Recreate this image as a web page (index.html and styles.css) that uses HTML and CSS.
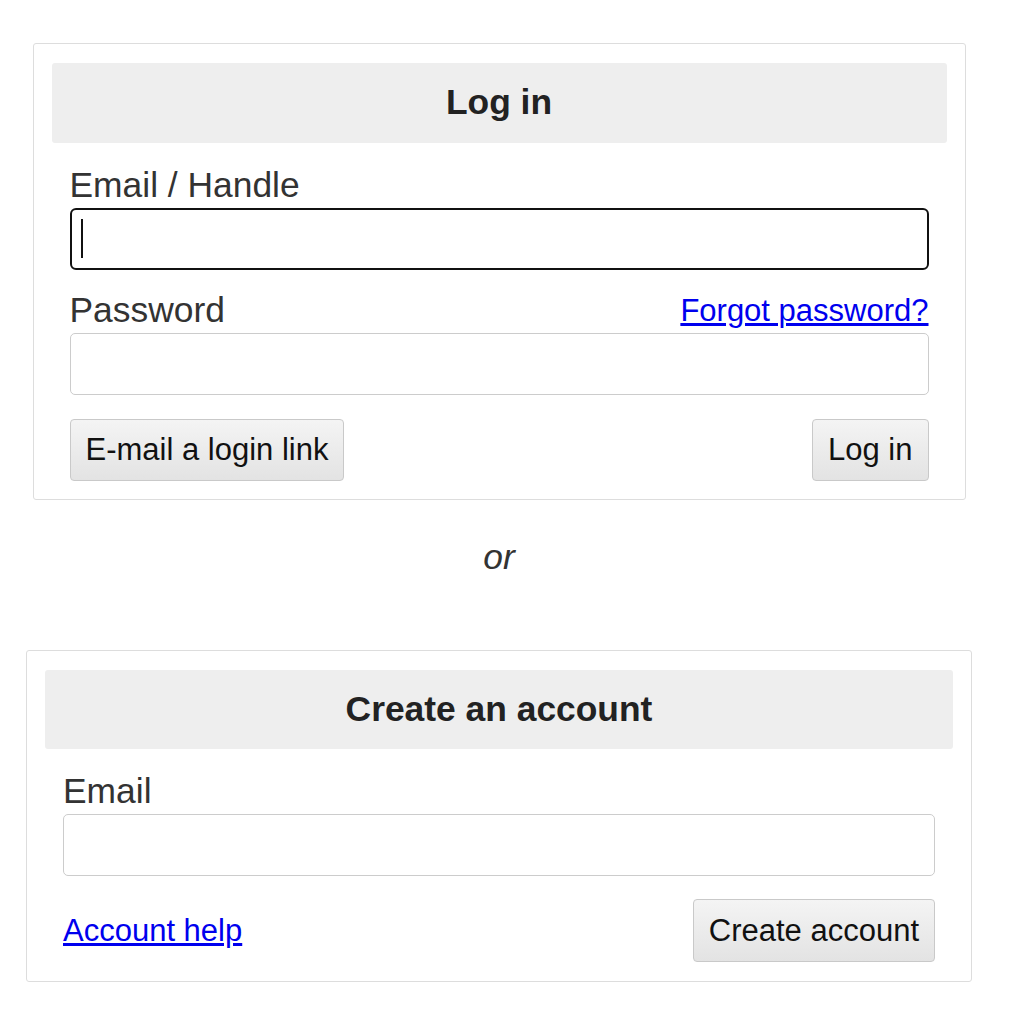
FILE: index.html
```html
<!DOCTYPE html>
<html lang="en">
<head>
  <title>Log in</title>
  <meta charset="utf-8">
  <meta name="viewport" content="width=device-width, initial-scale=1">
  <link rel="stylesheet" href="styles.css">
</head>
<body>
  <main class="page">
    <section class="panel panel--login">
      <h2 class="panel__title">Log in</h2>
      <form class="panel__body" action="#">
        <label class="field__label" for="handle">Email / Handle</label>
        <span class="field__control field__control--caret">
          <input class="field__input field__input--active" id="handle" type="text" autofocus>
        </span>

        <div class="field__head">
          <label class="field__label" for="password">Password</label>
          <a class="link" href="#">Forgot password?</a>
        </div>
        <input class="field__input" id="password" type="password">

        <div class="panel__actions">
          <button class="button" type="button">E-mail a login link</button>
          <button class="button" type="submit">Log in</button>
        </div>
      </form>
    </section>

    <p class="divider">or</p>

    <section class="panel panel--signup">
      <h2 class="panel__title">Create an account</h2>
      <form class="panel__body" action="#">
        <label class="field__label" for="email">Email</label>
        <input class="field__input" id="email" type="email">

        <div class="panel__actions">
          <a class="link" href="#">Account help</a>
          <button class="button" type="submit">Create account</button>
        </div>
      </form>
    </section>
  </main>
</body>
</html>
```

FILE: styles.css
```css
*, *::before, *::after {
  box-sizing: border-box;
}

html {
  color: #333333;
  font-family: "Liberation Sans", Arial, sans-serif;
}

body {
  margin: 0;
  background-color: #FFFFFF;
}

.page {
  width: 998px;
  padding-top: 43px;
  display: flex;
  flex-direction: column;
  align-items: center;
}

.panel {
  border: 1px solid #DDDDDD;
  border-radius: 3px;
  padding: 19px 18px 18px;
}

.panel--login {
  width: 933px;
}

.panel--signup {
  width: 946px;
  padding-bottom: 19px;
}

.panel__title {
  margin: 0;
  padding: 19px 0 20px;
  border-radius: 3px;
  background-color: #EEEEEE;
  color: #222222;
  font-size: 35.4px;
  font-weight: 700;
  line-height: 41px;
  text-align: center;
}

.panel--signup .panel__title {
  padding-bottom: 19px;
}

.panel__body {
  padding: 22px 18px 0;
}

.field__label {
  display: block;
  margin-bottom: 2px;
  font-size: 35.4px;
  line-height: 41px;
}

.field__head {
  display: flex;
  justify-content: space-between;
  align-items: center;
  margin-bottom: 2px;
}

.field__head .field__label {
  margin-bottom: 0;
}

.field__control {
  display: block;
  position: relative;
  margin-bottom: 20px;
}

.field__control .field__input {
  margin-bottom: 0;
}

/* text cursor of the focused field */
.field__control--caret::after {
  content: "";
  position: absolute;
  top: 11px;
  left: 11px;
  width: 2px;
  height: 39px;
  background-color: #111111;
}

.field__input {
  display: block;
  width: 100%;
  height: 62px;
  margin: 0 0 20px;
  border: 1px solid #CCCCCC;
  border-radius: 5px;
  padding: 0 10px;
  color: #111111;
  font-family: inherit;
  font-size: 31px;
  background-color: #FFFFFF;
}

.field__input:focus,
.field__input--active {
  border: 2px solid #111111;
  border-radius: 6px;
  padding-left: 9px;
  outline: none;
  caret-color: transparent;
}

.panel__actions {
  display: flex;
  justify-content: space-between;
  align-items: center;
}

.panel--login .panel__actions {
  margin-top: 24px;
}

.panel--signup .panel__actions {
  margin-top: 23px;
}

.link {
  color: #0000EE;
  font-size: 31px;
  text-decoration: underline;
}

.button {
  height: 62px;
  border: 1px solid #C9C9C9;
  border-radius: 4px;
  padding: 0 15px;
  color: #111111;
  font-family: inherit;
  font-size: 31px;
  background: linear-gradient(#F4F4F4, #E3E3E3);
  cursor: pointer;
}

.panel--signup .button {
  height: 63px;
}

.divider {
  margin: 37px 0 72px;
  font-size: 35.4px;
  font-style: italic;
  line-height: 41px;
}
```
